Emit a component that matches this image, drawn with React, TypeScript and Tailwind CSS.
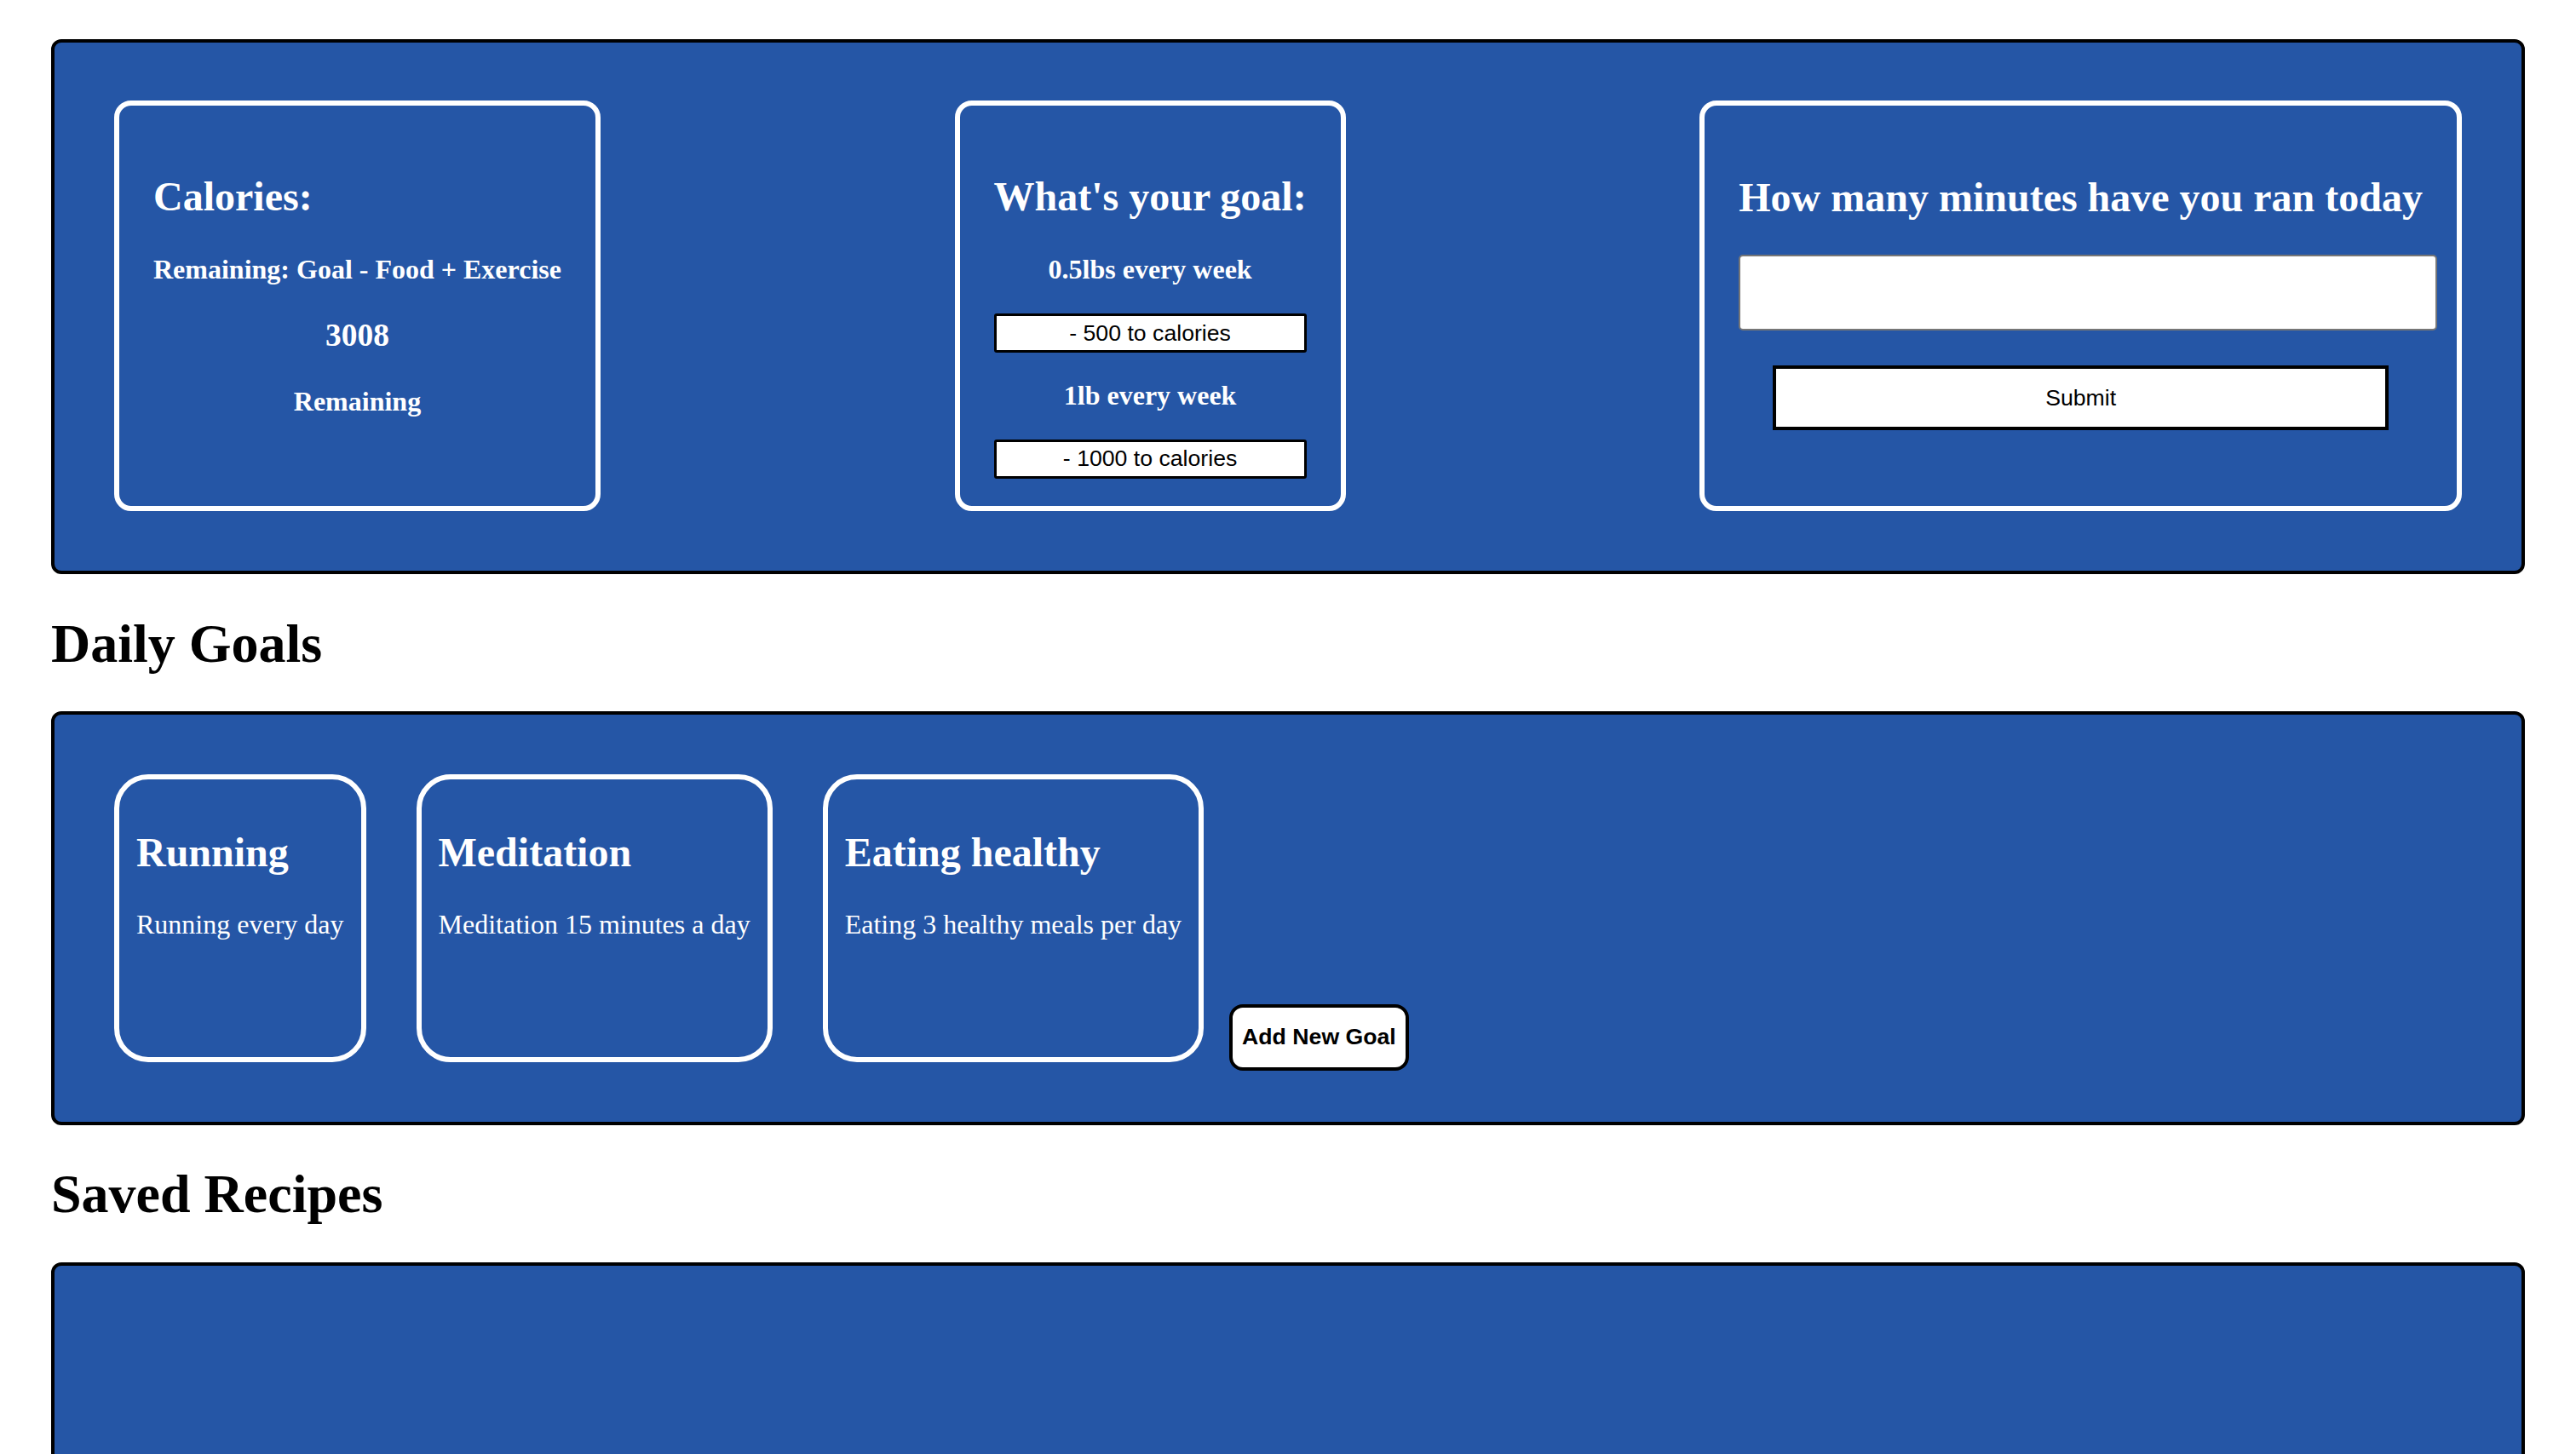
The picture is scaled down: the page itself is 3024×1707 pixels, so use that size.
import React from 'react'

type Goal = {
  title: string
  text: string
}

const goals: Goal[] = [
  { title: 'Running', text: 'Running every day' },
  { title: 'Meditation', text: 'Meditation 15 minutes a day' },
  { title: 'Eating healthy', text: 'Eating 3 healthy meals per day' },
]

const CaloriesCard = () => {
  return (
    <div className="h-[482px] border-[6px] border-white rounded-[20px] px-[40px] pt-[40px] text-white">
      <h2 className="mt-[39px] text-[48px] font-bold whitespace-nowrap">Calories:</h2>
      <h4 className="mt-[40px] text-[32px] font-bold text-center whitespace-nowrap">Remaining: Goal - Food + Exercise</h4>
      <h3 className="mt-[37px] text-[37.44px] font-bold text-center">3008</h3>
      <h4 className="mt-[38px] text-[32px] font-bold text-center">Remaining</h4>
    </div>
  )
}

const GoalCard = () => {
  const btn = "block w-full h-[46px] bg-white border-[3px] border-black rounded-[3px] text-black text-[26.67px] font-['Liberation_Sans',Arial,sans-serif]"
  return (
    <div className="h-[482px] border-[6px] border-white rounded-[20px] px-[40px] pt-[40px] text-white text-center">
      <h2 className="mt-[39px] text-[48px] font-bold whitespace-nowrap">What's your goal:</h2>
      <h4 className="mt-[40px] text-[32px] font-bold">0.5lbs every week</h4>
      <button className={`mt-[33px] ${btn}`}>- 500 to calories</button>
      <h4 className="mt-[32px] text-[32px] font-bold">1lb every week</h4>
      <button className={`mt-[33px] ${btn}`}>- 1000 to calories</button>
    </div>
  )
}

const MinutesCard = () => {
  return (
    <div className="h-[482px] border-[6px] border-white rounded-[20px] px-[40px] pt-[40px] text-white">
      <h2 className="mt-[40px] text-[48px] font-bold whitespace-nowrap">How many minutes have you ran today</h2>
      <input type="text" className="block mt-[40px] w-[calc(100%+17px)] h-[89px] bg-white border-2 border-[#767676] rounded-[5px] outline-none" />
      <button className="block mx-auto mt-[41px] w-[90%] h-[76px] bg-white border-4 border-black text-black text-[26.67px] font-['Liberation_Sans',Arial,sans-serif]">
        Submit
      </button>
    </div>
  )
}

export default function App() {
  return (
    <div className="min-h-screen bg-white font-['Liberation_Serif','Times_New_Roman',serif] leading-[1.15] text-black px-[60px] pt-[46px] pb-[60px]">
      <div className="flex justify-between border-4 border-black rounded-[12px] bg-[#2556a6] px-[70px] pt-[68px] pb-[70px]">
        <CaloriesCard />
        <GoalCard />
        <MinutesCard />
      </div>

      <h1 className="mt-[45px] text-[64px] font-bold">Daily Goals</h1>
      <div className="mt-[42px] border-4 border-black rounded-[12px] bg-[#2556a6] px-[70px] pt-[70px] pb-[70px]">
        <div className="flex items-stretch h-[338px]">
          {goals.map((goal, i) => (
            <div
              key={goal.title}
              className={`border-[6px] border-white rounded-[40px] px-[20px] pt-[20px] text-white ${i < goals.length - 1 ? 'mr-[59px]' : 'mr-[30px]'}`}
            >
              <h2 className="mt-[38px] text-[48px] font-bold whitespace-nowrap">{goal.title}</h2>
              <p className="mt-[39px] text-[32px] whitespace-nowrap">{goal.text}</p>
            </div>
          ))}
          <button className="self-start mt-[270px] h-[78px] px-[11px] bg-white border-4 border-black rounded-[16px] text-black text-[26.67px] font-bold whitespace-nowrap font-['Liberation_Sans',Arial,sans-serif]">
            Add New Goal
          </button>
        </div>
      </div>

      <h1 className="mt-[44px] text-[64px] font-bold">Saved Recipes</h1>
      <div className="mt-[44px] h-[480px] border-4 border-black rounded-[12px] bg-[#2556a6]"></div>
    </div>
  )
}
